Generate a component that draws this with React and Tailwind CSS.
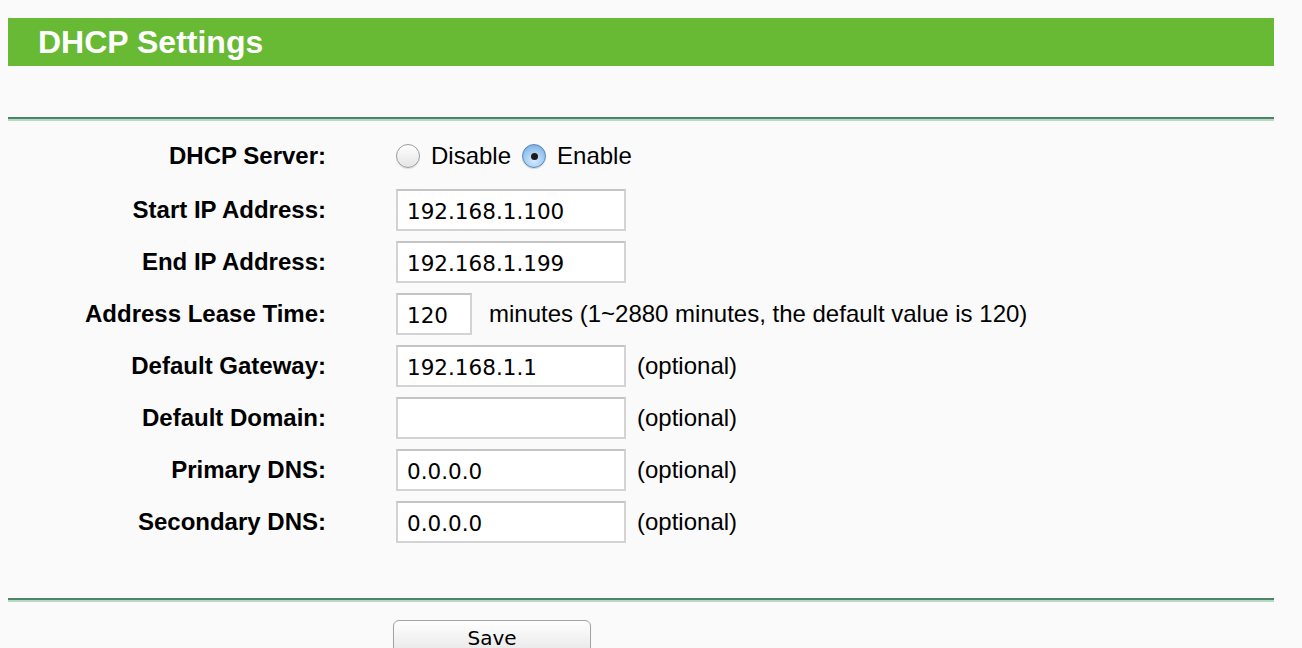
import React from 'react';

const rows = [
  { label: 'Start IP Address:', value: '192.168.1.100' },
  { label: 'End IP Address:', value: '192.168.1.199' },
  { label: 'Address Lease Time:', value: '120', lease: true },
  { label: 'Default Gateway:', value: '192.168.1.1', optional: true },
  { label: 'Default Domain:', value: '', optional: true },
  { label: 'Primary DNS:', value: '0.0.0.0', optional: true },
  { label: 'Secondary DNS:', value: '0.0.0.0', optional: true },
];

function Radio({ checked }) {
  if (checked) {
    return (
      <span className="flex h-[24px] w-[24px] items-center justify-center rounded-full border border-[#5a86b8] bg-[radial-gradient(circle_at_50%_70%,#d6ecff_0%,#9cc8f0_55%,#6d9fd6_100%)] shadow-[0_1px_1px_rgba(0,0,0,0.15)]">
        <span className="h-[7px] w-[7px] rounded-full bg-[#1b1b1b]" />
      </span>
    );
  }
  return (
    <span className="h-[24px] w-[24px] rounded-full border border-[#9d9d9d] bg-[linear-gradient(#ffffff,#e4e4e4)] shadow-[0_1px_1px_rgba(0,0,0,0.12)]" />
  );
}

function Divider() {
  return (
    <div>
      <div className="h-[2px] bg-[#4a8766]" />
      <div className="h-[2px] bg-[#b9d8c5]" />
    </div>
  );
}

export default function App() {
  return (
    <div className="min-h-[648px] bg-[#fafafa] pl-[8px] pt-[18px] font-['Liberation_Sans',Arial,sans-serif] text-black">
      <div className="w-[1266px]">
        <div className="flex h-[48px] items-center bg-[#68b934] pl-[30px]">
          <h1 className="text-[32px] font-bold leading-none text-white">DHCP Settings</h1>
        </div>

        <div className="h-[51px]" />
        <Divider />

        <div className="pt-[7px]">
          <div className="flex h-[56px] items-center">
            <div className="w-[318px] text-right text-[24px] font-bold">DHCP Server:</div>
            <div className="ml-[70px] flex items-center text-[24px]">
              <Radio />
              <span className="ml-[11px]">Disable</span>
              <span className="ml-[11px]"><Radio checked /></span>
              <span className="ml-[11px]">Enable</span>
            </div>
          </div>

          {rows.map((r) => (
            <div key={r.label} className="flex h-[52px] items-center">
              <div className="w-[318px] text-right text-[24px] font-bold">{r.label}</div>
              <div className="ml-[70px] flex items-center">
                <div
                  className={`flex h-[42px] items-center border-2 border-[#d3d3d3] border-t-[#c4c4c4] bg-white pl-[9px] pt-[5px] font-['DejaVu_Sans',sans-serif] text-[21.5px] ${
                    r.lease ? 'w-[76px]' : 'w-[230px]'
                  }`}
                >
                  {r.value}
                </div>
                {r.lease && (
                  <span className="ml-[17px] text-[24px]">
                    minutes (1~2880 minutes, the default value is 120)
                  </span>
                )}
                {r.optional && <span className="ml-[11px] text-[24px]">(optional)</span>}
              </div>
            </div>
          ))}
        </div>

        <div className="h-[50px]" />
        <Divider />

        <div className="pl-[385px] pt-[18px]">
          <button className="flex h-[40px] w-[198px] items-start justify-center rounded-[6px] border border-[#a3a3a3] bg-[linear-gradient(#ffffff,#f1f1f1_50%,#e2e2e2)] pt-[2px] font-['DejaVu_Sans',sans-serif] text-[20px] text-black shadow-[0_1px_1px_rgba(0,0,0,0.1)]">
            Save
          </button>
        </div>
      </div>
    </div>
  );
}
